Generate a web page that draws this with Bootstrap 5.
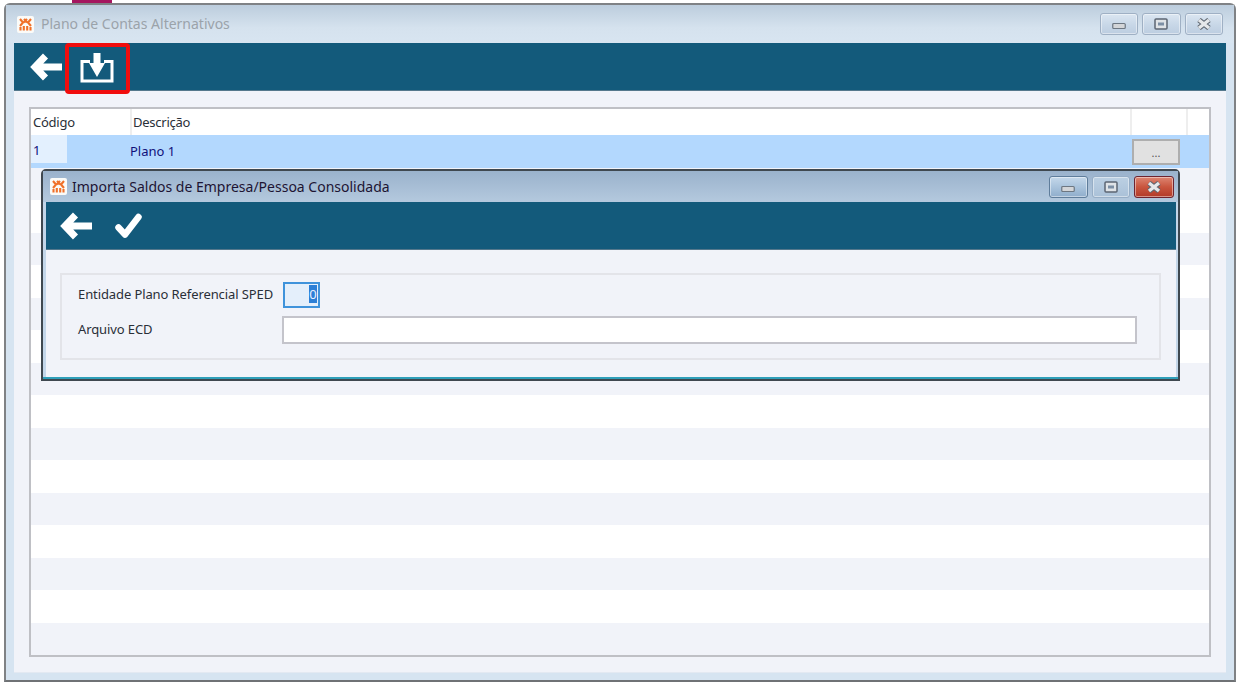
<!DOCTYPE html>
<html lang="pt-BR">
<head>
<meta charset="utf-8">
<title>Plano de Contas Alternativos</title>
<link href="https://cdn.jsdelivr.net/npm/bootstrap@5.3.0/dist/css/bootstrap.min.css" rel="stylesheet">
<style>
html,body{height:685px;overflow:hidden;background:#fff}
body{font-family:"Noto Sans","Open Sans","Liberation Sans",sans-serif;font-size:13px;color:#2a2f38}
.top-sliver{height:3px}
.top-sliver span{display:block;width:40px;height:3px;margin-left:72px;background:#a5165f}
.win-outer{margin:0 4px;height:679px;border:2px solid #7f8285;border-bottom-color:#6f7275;border-radius:6px 6px 0 0;background:#d6e4f1;padding:0 8px 8px 8px}
.title-outer{height:38px;margin:0 -8px;padding:0 11px 0 11px;background:linear-gradient(#bccddd,#d5e2ee 60%,#d8e5f1)}
.win-title{font-size:14px;line-height:1}
.title-outer .win-title{color:#9ba3aa}
.title-lead{gap:7px}
.app-logo{width:17px;height:17px;flex:none}
.ctl-set{gap:4px}
.ctl{width:38.500px;height:22px;border:1px solid #9fb0c4;border-radius:3px;background:linear-gradient(#dbe6f1,#c9d8e8 50%,#bccde0);box-shadow:inset 0 0 0 1px rgba(255,255,255,.45)}
.client{height:calc(100% - 38px);background:#f1f3f9;box-shadow:0 1px 0 #e3e9f2}
.tool-strip{height:48px;background:#135a7b;border-bottom:1px solid #55788c;padding-left:16px}
.tool-btn{flex:none}
.mark-box{position:absolute;left:51px;top:0;width:65px;height:51px;border:4px solid #f10d0d;border-radius:4px}
.client-pad{padding:16px 15px 15px 15px}
.data-grid{height:550px;background:#fff;border:2px solid #bfc0c5}
.grid-head{height:26px;line-height:27px;letter-spacing:-.25px}
.hc{border-right:2px solid #eeeeee;padding-left:2px;height:100%}
.hc-a{width:101px}
.hc-b{width:1000px;padding-left:1px}
.hc-c{width:56px}
.grid-row{height:32.500px}
.row-alt{background:#f1f3f9}
.row-sel{background:#b3d8fe;color:#10107a;line-height:32px}
.cell-code{width:36px;background:#e3f0fe;height:28px;padding-left:2px;line-height:30px}
.cell-desc{padding-left:63px;width:1065px}
.dots-btn{width:48px;height:26px;margin-top:4px;background:#e1e1e1;border:2px solid #aeaeae;font-size:11px;line-height:24px;color:#555;text-align:center}
.dlg{position:absolute;left:10px;top:60px;width:1139px;height:212px;background:#c3d6e9;border:2px solid #3f4850;border-radius:5px 5px 0 0;padding:0 2px 2px 3px;box-shadow:inset 0 -2px 0 #2f9fb9}
.dlg-title{height:31px;margin:0 -2px 0 -3px;padding:0 4px 0 7px;background:linear-gradient(#9ab2cc,#b4c9de)}
.dlg .win-title{color:#1d1433}
.dlg .title-lead{gap:5px}
.dlg .tool-strip{padding-left:14px}
.check-btn{margin-left:22px}
.ctl-on{background:linear-gradient(#c5d8ea,#a9c3dc 50%,#8fadcb);border-color:#5f7d9b}
.ctl-off{background:linear-gradient(#bcd0e3,#aac1d8);border-color:#97aec6}
.ctl-close{width:40px;background:linear-gradient(#dd8673,#c9553e 50%,#b23a28);border-color:#6e2430}
.dlg-body{height:127px;background:#f1f3f9;padding:23px 15px 0 14px}
.group-frame{height:87px;border:2px solid #e3e4e9;padding:7px 22px 0 16px;font-size:13px;letter-spacing:-.1px}
.lbl{width:204px;flex:none}
.num-field{width:37px;height:26px;margin-left:1px;border:2px solid #3f93db;background:#e4effb;padding-right:1px;line-height:20px}
.num-field span{background:#2c7fd6;color:#e8f0ff;display:inline-block;width:8px;height:18px;text-align:center;font-size:13px;line-height:18px}
.file-field{height:28px;min-height:28px;border:2px solid #c4c4cb;border-radius:0;padding:0 4px;box-shadow:none}
.file-field:focus{box-shadow:none;border-color:#c4c4cb}
.row-gap{margin-top:8px}
</style>
</head>
<body>
<svg width="0" height="0" class="position-absolute">
  <defs>
    <symbol id="logo" viewBox="0 0 17 17">
      <rect width="17" height="17" rx="2" fill="#fbfbf8"/>
      <g fill="none" stroke="#f0712a" stroke-width="2.100">
        <path d="M3 3l3 3.500-3 3.500M14 3l-3 3.500 3 3.500M7 3l3 3.500M10 3L7 6.500"/>
        <path d="M3.500 11v3.500M6.800 10v4.500M10.200 10v4.500M13.500 11v3.500"/>
      </g>
    </symbol>
    <symbol id="back" viewBox="0 0 33 28">
      <path d="M15.500 3L5 14l10.500 11M6 14h26" fill="none" stroke="#fff" stroke-width="7"/>
    </symbol>
    <symbol id="min" viewBox="0 0 14 8"><rect x=".75" y="1.500" width="12.500" height="5" rx="1" fill="#d3d5d8" stroke="#6d7782" stroke-width="1.200"/></symbol>
    <symbol id="max" viewBox="0 0 14 12"><rect x="1" y="1" width="12" height="10" rx="1" fill="#dfe3e7" stroke="#5c6673" stroke-width="1.500"/><rect x="4" y="4.500" width="6" height="3" fill="#7c8fa5"/></symbol>
    <symbol id="cls" viewBox="0 0 16 12"><path d="M3 2l10 8M13 2L3 10" stroke="#5e6670" stroke-width="5.400"/><path d="M3 2l10 8M13 2L3 10" stroke="#e6e8ea" stroke-width="3.400"/></symbol>
  </defs>
</svg>

<div class="top-sliver"><span></span></div>
<div class="win-outer">
  <div class="title-outer d-flex align-items-center justify-content-between">
    <div class="d-flex align-items-center title-lead">
      <svg class="app-logo"><use href="#logo"/></svg>
      <span class="win-title">Plano de Contas Alternativos</span>
    </div>
    <div class="d-flex ctl-set">
      <div class="ctl d-flex align-items-center justify-content-center"><svg width="14" height="8" class="mt-1"><use href="#min"/></svg></div>
      <div class="ctl d-flex align-items-center justify-content-center"><svg width="14" height="12"><use href="#max"/></svg></div>
      <div class="ctl d-flex align-items-center justify-content-center"><svg width="16" height="12"><use href="#cls"/></svg></div>
    </div>
  </div>

  <div class="client">
    <div class="tool-strip d-flex align-items-center position-relative">
      <svg class="tool-btn" width="33" height="28"><use href="#back"/></svg>
      <svg class="tool-btn ms-3" width="36" height="32" viewBox="0 0 36 32">
        <path d="M11 10.500H3v19.500h30V10.500H25" fill="none" stroke="#fff" stroke-width="3"/>
        <path d="M14.500 2h7v10H26l-8 14-8-14h4.500z" fill="#fff"/>
      </svg>
      <div class="mark-box"></div>
    </div>

    <div class="client-pad">
      <div class="data-grid position-relative">
        <div class="grid-head d-flex">
          <div class="hc hc-a">Código</div>
          <div class="hc hc-b">Descrição</div>
          <div class="hc hc-c"></div>
        </div>
        <div class="grid-row row-sel d-flex align-items-start">
          <div class="cell-code">1</div>
          <div class="cell-desc">Plano 1</div>
          <div class="dots-btn">...</div>
        </div>
        <div class="grid-row row-alt"></div><div class="grid-row"></div>
        <div class="grid-row row-alt"></div><div class="grid-row"></div>
        <div class="grid-row row-alt"></div><div class="grid-row"></div>
        <div class="grid-row row-alt"></div><div class="grid-row"></div>
        <div class="grid-row row-alt"></div><div class="grid-row"></div>
        <div class="grid-row row-alt"></div><div class="grid-row"></div>
        <div class="grid-row row-alt"></div><div class="grid-row"></div>
        <div class="grid-row row-alt"></div>

        <div class="dlg">
          <div class="dlg-title d-flex align-items-center justify-content-between">
            <div class="d-flex align-items-center title-lead">
              <svg class="app-logo"><use href="#logo"/></svg>
              <span class="win-title">Importa Saldos de Empresa/Pessoa Consolidada</span>
            </div>
            <div class="d-flex ctl-set">
              <div class="ctl ctl-on d-flex align-items-center justify-content-center"><svg width="14" height="8" class="mt-1"><use href="#min"/></svg></div>
              <div class="ctl ctl-off d-flex align-items-center justify-content-center"><svg width="14" height="12"><use href="#max"/></svg></div>
              <div class="ctl ctl-close d-flex align-items-center justify-content-center"><svg width="16" height="12"><use href="#cls"/></svg></div>
            </div>
          </div>
          <div class="tool-strip d-flex align-items-center">
            <svg class="tool-btn" width="33" height="28"><use href="#back"/></svg>
            <svg class="tool-btn check-btn" width="27" height="26" viewBox="0 0 27 26">
              <path d="M3.500 14.500l6.500 7L23.500 4" fill="none" stroke="#fff" stroke-width="6.500" stroke-linecap="round" stroke-linejoin="round"/>
            </svg>
          </div>
          <div class="dlg-body">
            <div class="group-frame">
              <div class="d-flex align-items-center">
                <label class="lbl" for="f-ent">Entidade Plano Referencial SPED</label>
                <div class="num-field text-end" id="f-ent"><span>0</span></div>
              </div>
              <div class="d-flex align-items-center row-gap">
                <label class="lbl" for="f-arq">Arquivo ECD</label>
                <input class="form-control file-field flex-grow-1 w-auto" id="f-arq" type="text">
              </div>
            </div>
          </div>
        </div>
      </div>
    </div>
  </div>
</div>
</body>
</html>
